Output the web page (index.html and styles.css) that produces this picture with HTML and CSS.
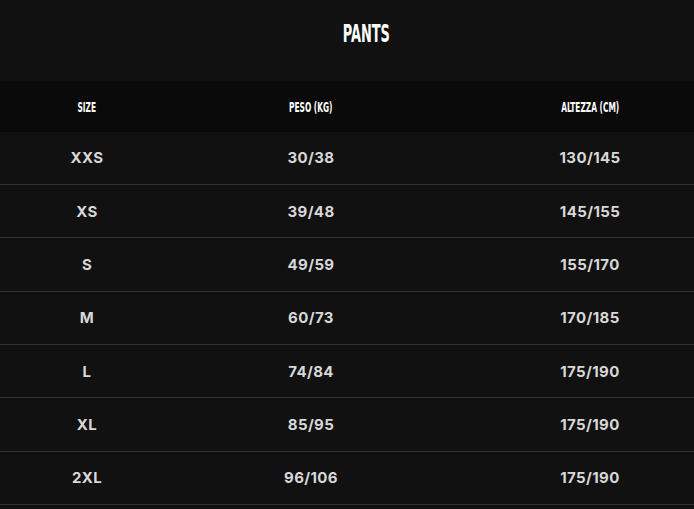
FILE: index.html
```html
<!DOCTYPE html>
<html lang="it">
<head>
<meta charset="utf-8">
<title>Pants</title>
<link rel="stylesheet" href="styles.css">
</head>
<body>
<div class="page">
  <h1 class="title"><span class="cond">PANTS</span></h1>
  <div class="table">
    <div class="row head">
      <div class="cell"><span class="cond">SIZE</span></div>
      <div class="cell"><span class="cond">PESO (KG)</span></div>
      <div class="cell"><span class="cond">ALTEZZA (CM)</span></div>
    </div>
    <div class="row"><div class="cell">XXS</div><div class="cell">30/38</div><div class="cell">130/145</div></div>
    <div class="row"><div class="cell">XS</div><div class="cell">39/48</div><div class="cell">145/155</div></div>
    <div class="row"><div class="cell">S</div><div class="cell">49/59</div><div class="cell">155/170</div></div>
    <div class="row"><div class="cell">M</div><div class="cell">60/73</div><div class="cell">170/185</div></div>
    <div class="row"><div class="cell">L</div><div class="cell">74/84</div><div class="cell">175/190</div></div>
    <div class="row"><div class="cell">XL</div><div class="cell">85/95</div><div class="cell">175/190</div></div>
    <div class="row"><div class="cell">2XL</div><div class="cell">96/106</div><div class="cell">175/190</div></div>
  </div>
</div>
</body>
</html>
```
FILE: styles.css
```css
html, body {
  margin: 0;
  padding: 0;
  background: #111111;
  overflow: hidden;
}
.page {
  width: 732px;
}
.cond {
  display: inline-block;
  font-family: "Liberation Sans Narrow", "DejaVu Sans Condensed", sans-serif;
  font-weight: 700;
  color: #ffffff;
  transform: scaleX(0.59);
}
.title {
  margin: 0;
  height: 81px;
  box-sizing: border-box;
  padding-top: 20px;
  text-align: center;
  font-size: 24px;
  line-height: 28px;
  font-weight: 700;
}
.title .cond {
  transform: scaleX(0.6);
}
.table {
  display: flex;
  flex-direction: column;
}
.row {
  display: grid;
  grid-template-columns: 174px 274px 284px;
  height: 53.33px;
  box-sizing: border-box;
  border-bottom: 1px solid #333333;
  align-items: center;
  font-family: "Inter", "Open Sans", sans-serif;
  font-weight: 700;
  font-size: 15px;
  letter-spacing: 0.4px;
  color: #d8d8d8;
}
.row.head {
  height: 50.6px;
  border-bottom: 0;
  background: #0a0a0a;
  font-size: 14px;
  letter-spacing: 0;
}
.cell {
  text-align: center;
}
```
